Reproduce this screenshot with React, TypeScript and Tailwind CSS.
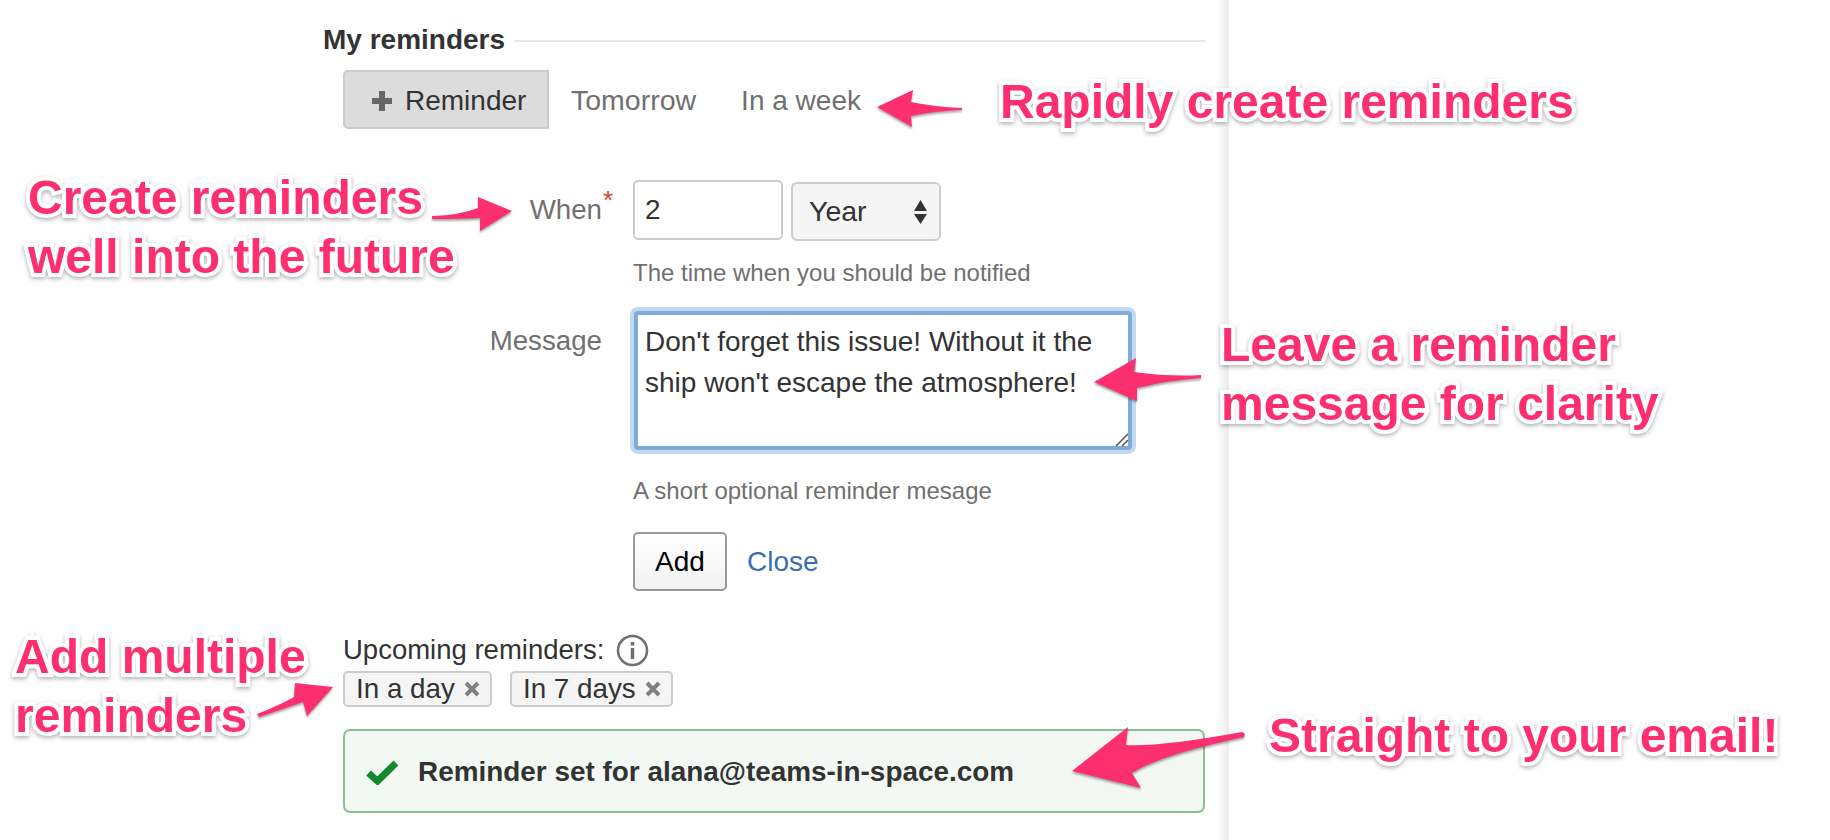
import React from "react";

const calloutClass =
  "absolute whitespace-nowrap text-[48px] font-bold leading-[59px] text-[#fe2f6e] [-webkit-text-stroke:8px_white] [paint-order:stroke_fill] [filter:drop-shadow(0_2px_2px_rgba(0,0,0,0.3))]";

const ARROWS = [
  "M877 107 L913 90 L911 102 Q935 107 962 108 L962 110 Q935 111 911 116 L912 127 Z",
  "M432 216 Q460 215 478 208 L478 197 L512 211 L480 231 L480 218 Q460 219 432 219 Z",
  "M1094 382 L1136 358 L1134 372 Q1170 377 1201 375 L1201 378 Q1170 380 1137 388 L1137 401 Z",
  "M257 714 Q280 705 294 697 L295 683 L333 687 L307 716 L303 702 Q280 710 259 717 Z",
  "M1072 771 L1128 727 L1126 745 Q1160 747 1242 732 Q1246 733 1244 737 Q1160 755 1132 773 L1141 788 Z",
];

const Arrows = () => (
  <svg
    className="absolute left-0 top-0 pointer-events-none [filter:drop-shadow(0_2px_1px_rgba(0,0,0,0.35))]"
    width="1830"
    height="840"
    viewBox="0 0 1830 840"
  >
    {ARROWS.map((d) => (
      <path key={d} d={d} fill="#fe2f6e" />
    ))}
  </svg>
);

const TagClose = () => (
  <svg width="16" height="16" viewBox="0 0 16 16" className="shrink-0">
    <path d="M2 2 L14 14 M14 2 L2 14" stroke="#808080" strokeWidth="4" />
  </svg>
);

const Tag = ({ label }: { label: string }) => (
  <div className="flex h-[36px] items-center gap-[9px] rounded-[5px] border-2 border-[#cccccc] bg-[#f5f5f5] pl-[11px] pr-[10px] text-[27.8px] text-[#333333]">
    <span>{label}</span>
    <TagClose />
  </div>
);

export default function App() {
  return (
    <div className="relative h-[840px] w-[1830px] overflow-hidden bg-white font-['Liberation_Sans',Arial,sans-serif]">
      <div className="flex h-[840px]">
        <main className="w-[1216px] pl-[323px] pr-[11px] pt-[20px]">
          {/* section header */}
          <div className="flex h-[40px] items-center gap-[10px]">
            <h2 className="text-[28px] font-bold text-[#333333]">My reminders</h2>
            <div className="mt-[2px] h-[2px] flex-1 bg-[#e5e5e5]" />
          </div>

          <div className="ml-[20px] mt-[10px] flex h-[59px] items-center text-[28.5px] text-[#707070]">
            <button className="flex h-[59px] w-[206px] items-center gap-[12px] rounded-l-[5px] border-2 border-[#cccccc] bg-[#dcdcdc] pl-[26px] pt-[2px] text-[28px] text-[#333333]">
              <svg width="22" height="22" viewBox="0 0 22 22">
                <path d="M11 1 V21 M1 11 H21" stroke="#666666" strokeWidth="6" />
              </svg>
              Reminder
            </button>
            <span className="ml-[22px] mt-[2px]">Tomorrow</span>
            <span className="ml-[45px] mt-[2px] text-[28px]">In a week</span>
          </div>

          {/* reminder form */}
          <div className="mt-[51px] flex items-start">
            <label className="relative w-[280px] pr-[1px] text-right text-[27.7px] leading-[60px] text-[#707070]">
              When
              <span className="absolute left-[280px] top-[-10px] text-[26px] text-[#d04437]">*</span>
            </label>
            <input
              readOnly
              value="2"
              className="ml-[30px] h-[60px] w-[150px] rounded-[5px] border-2 border-[#cccccc] bg-white pl-[10px] text-[28px] text-[#333333] outline-none"
            />
            <div className="relative ml-[8px] mt-[2px] h-[59px] w-[150px]">
              <select className="h-full w-full appearance-none rounded-[6px] border-2 border-[#cccccc] bg-[#f5f5f5] pl-[16px] text-[28.5px] text-[#333333] outline-none">
                <option>Year</option>
              </select>
              <svg className="absolute right-[14px] top-[18px]" width="13" height="24" viewBox="0 0 13 24">
                <path d="M6.5 0 L13 11 H0 Z M0 14 H13 L6.5 24 Z" fill="#333333" />
              </svg>
            </div>
          </div>
          <p className="ml-[310px] mt-[17px] text-[24px] leading-[30px] text-[#707070]">
            The time when you should be notified
          </p>

          <div className="mt-[23px] flex items-start">
            <label className="w-[280px] pr-[1px] text-right text-[27.7px] leading-[60px] text-[#707070]">
              Message
            </label>
            <div className="relative ml-[31px] h-[139px] w-[498px]">
              <textarea
                readOnly
                defaultValue="Don't forget this issue! Without it the ship won't escape the atmosphere!"
                className="h-full w-full resize-none rounded-[4px] border-[4px] border-[#7fabdb] bg-white pl-[7px] pr-[7px] pt-[6px] text-[28px] leading-[41px] text-[#333333] shadow-[0_0_0_4px_#c3d9f0] outline-none"
              />
              <svg className="absolute bottom-[3px] right-[3px]" width="14" height="14" viewBox="0 0 14 14">
                <path d="M1 13 L13 1 M7 13 L13 7" stroke="#555555" strokeWidth="1.5" />
              </svg>
            </div>
          </div>
          <p className="ml-[310px] mt-[26px] text-[24px] leading-[30px] text-[#707070]">
            A short optional reminder mesage
          </p>

          <div className="ml-[310px] mt-[26px] flex items-center">
            <button className="h-[59px] w-[94px] rounded-[5px] border-2 border-[#999999] bg-gradient-to-b from-white to-[#f2f2f2] text-[28px] text-black">
              Add
            </button>
            <a className="ml-[20px] text-[28px] text-[#3b6eb0]">Close</a>
          </div>

          {/* upcoming */}
          <div className="ml-[20px] mt-[44px]">
            <div className="flex h-[30px] items-center gap-[12px] text-[27.5px] text-[#333333]">
              <span>Upcoming reminders:</span>
              <svg width="33" height="33" viewBox="0 0 33 33">
                <circle cx="16.5" cy="16.5" r="14.5" fill="none" stroke="#707070" strokeWidth="2.5" />
                <path d="M16.5 8 V11.5 M16.5 14 V25" stroke="#707070" strokeWidth="3.5" />
              </svg>
            </div>
            <div className="mt-[6px] flex gap-[18px]">
              <Tag label="In a day" />
              <Tag label="In 7 days" />
            </div>
            <div className="mt-[22px] flex h-[84px] items-center gap-[19px] rounded-[7px] border-2 border-[#85c491] bg-[#f3f8f5] pl-[21px] pt-[2px] text-[27.9px] font-bold text-[#333333]">
              <svg width="33" height="25" viewBox="0 0 33 25">
                <path d="M2.5 13 L11.5 21 L30 3" fill="none" stroke="#14892c" strokeWidth="7" />
              </svg>
              <span>Reminder set for alana@teams-in-space.com</span>
            </div>
          </div>
        </main>
        <div className="h-full w-[13px] bg-gradient-to-r from-white to-[#ececec]" />
      </div>

      {/* annotations on top of the form */}
      <Arrows />
      <div className={`${calloutClass} left-[1000px] top-[72px]`}>Rapidly create reminders</div>
      <div className={`${calloutClass} left-[28px] top-[168px] text-[47.7px]`}>
        Create reminders
        <br />
        well into the future
      </div>
      <div className={`${calloutClass} left-[1221px] top-[315px]`}>
        Leave a reminder
        <br />
        message for clarity
      </div>
      <div className={`${calloutClass} left-[15px] top-[627px]`}>
        Add multiple
        <br />
        reminders
      </div>
      <div className={`${calloutClass} left-[1269px] top-[706px]`}>Straight to your email!</div>
    </div>
  );
}
